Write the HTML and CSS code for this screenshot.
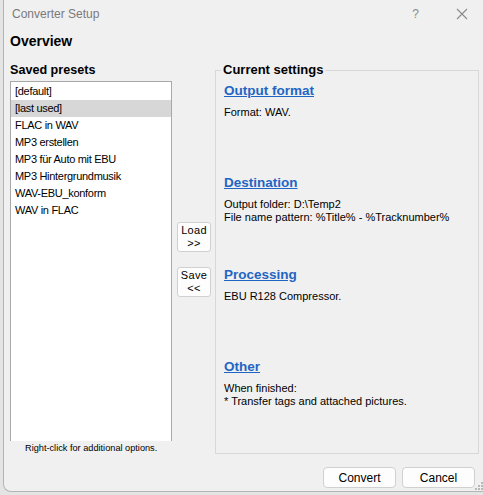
FILE: index.html
```html
<!DOCTYPE html>
<html>
<head>
<meta charset="utf-8">
<link rel="stylesheet" href="styles.css">
</head>
<body>
<div class="window">
  <div class="titlebar">
    <span class="title">Converter Setup</span>
    <span class="tb-btns">
      <span class="help">?</span>
      <svg class="close" width="12" height="12" viewBox="0 0 12 12"><path d="M1 1L11 11M11 1L1 11" stroke="#8a8a8a" stroke-width="1.1" fill="none"/></svg>
    </span>
  </div>
  <div class="heading">Overview</div>
  <div class="main">
    <div class="leftcol">
      <div class="label">Saved presets</div>
      <ul class="list">
        <li>[default]</li>
        <li class="sel">[last used]</li>
        <li>FLAC in WAV</li>
        <li>MP3 erstellen</li>
        <li>MP3 für Auto mit EBU</li>
        <li>MP3 Hintergrundmusik</li>
        <li>WAV-EBU_konform</li>
        <li>WAV in FLAC</li>
      </ul>
      <div class="hint">Right-click for additional options.</div>
    </div>
    <div class="midcol">
      <button class="small">Load<br>&gt;&gt;</button>
      <button class="small">Save<br>&lt;&lt;</button>
    </div>
    <fieldset class="group">
      <legend>Current settings</legend>
      <div class="section">
        <a class="link">Output format</a>
        <p>Format: WAV.</p>
      </div>
      <div class="section">
        <a class="link">Destination</a>
        <p>Output folder: D:\Temp2<br>File name pattern: %Title% - %Tracknumber%</p>
      </div>
      <div class="section">
        <a class="link">Processing</a>
        <p>EBU R128 Compressor.</p>
      </div>
      <div class="section">
        <a class="link">Other</a>
        <p>When finished:<br>* Transfer tags and attached pictures.</p>
      </div>
    </fieldset>
  </div>
  <div class="footer">
    <button class="btn">Convert</button>
    <button class="btn">Cancel</button>
    <svg class="grip" width="8" height="8" viewBox="0 0 8 8"><g fill="#b8b8b8"><rect x="6" y="0" width="2" height="2"/><rect x="3" y="3" width="2" height="2"/><rect x="6" y="3" width="2" height="2"/><rect x="0" y="6" width="2" height="2"/><rect x="3" y="6" width="2" height="2"/><rect x="6" y="6" width="2" height="2"/></g></svg>
  </div>
</div>
</body>
</html>
```
FILE: styles.css
```css
html, body {
  margin: 0;
  padding: 0;
  background: #e4e4e4;
  width: 483px;
  height: 495px;
  overflow: hidden;
  font-family: "Liberation Sans", Arial, sans-serif;
}
.window {
  margin-left: 3px;
  width: 480px;
  height: 492px;
  box-sizing: border-box;
  background: #f0f0f0;
  border-left: 1px solid #b4b4b4;
  border-bottom: 1px solid #b4b4b4;
  border-bottom-left-radius: 8px;
  display: flex;
  flex-direction: column;
  position: relative;
}
.titlebar {
  height: 28px;
  display: flex;
  align-items: center;
  justify-content: space-between;
  padding-left: 8px;
}
.title {
  font-size: 12px;
  color: #7a7a7a;
}
.tb-btns {
  display: flex;
  align-items: center;
}
.help {
  font-size: 12px;
  color: #8a8a8a;
  margin-right: 37px;
}
.close {
  margin-right: 15px;
}
.heading {
  font-weight: bold;
  font-size: 14px;
  height: 32px;
  line-height: 26px;
  padding-left: 6px;
  color: #000;
}
.main {
  display: flex;
  padding-left: 6px;
  height: 395px;
}
.leftcol {
  width: 162px;
  display: flex;
  flex-direction: column;
}
.label {
  font-weight: bold;
  font-size: 12.6px;
  line-height: 20px;
  height: 21px;
}
.list {
  list-style: none;
  margin: 0;
  padding: 1px 0 0 0;
  height: 360px;
  box-sizing: border-box;
  background: #fff;
  border: 1px solid #a8a8a8;
  border-bottom: none;
}
.list li {
  font-size: 11px;
  letter-spacing: -0.3px;
  line-height: 17px;
  height: 17px;
  padding-left: 4px;
  color: #000;
}
.list li.sel {
  background: #d7d7d7;
}
.hint {
  font-size: 9.2px;
  line-height: 12px;
  margin-top: 1px;
  padding-left: 15px;
  color: #000;
}
.midcol {
  width: 43px;
  display: flex;
  flex-direction: column;
  align-items: flex-start;
  padding-left: 5px;
  padding-top: 162px;
  gap: 15px;
  box-sizing: border-box;
}
.small {
  width: 34px;
  height: 30px;
  padding: 0;
  font-family: "Liberation Sans", Arial, sans-serif;
  font-size: 11px;
  line-height: 13px;
  letter-spacing: 0.3px;
  background: #fdfdfd;
  border: 1px solid #d0d0d0;
  border-radius: 3px;
  color: #000;
}
.group {
  margin: 0;
  width: 264px;
  height: 394px;
  box-sizing: border-box;
  border: 1px solid #d8d8d8;
  padding: 2px 8px 0 8px;
  min-width: 0;
}
.group legend {
  font-weight: bold;
  font-size: 13px;
  line-height: 20px;
  padding: 0 2px;
  margin-left: -3px;
  color: #000;
}
.section {
  height: 92px;
}
.link {
  display: block;
  font-weight: bold;
  font-size: 13.5px;
  line-height: 18px;
  color: #1f66c4;
  text-decoration: underline;
}
.section p {
  margin: 6px 0 0 0;
  font-size: 11px;
  line-height: 13px;
  color: #000;
}
.footer {
  display: flex;
  justify-content: flex-end;
  align-items: flex-start;
  padding-top: 12px;
  padding-right: 8px;
  gap: 6px;
  position: relative;
  flex: 1;
}
.btn {
  width: 73px;
  height: 21px;
  padding: 0;
  font-family: "Liberation Sans", Arial, sans-serif;
  font-size: 12px;
  background: #fdfdfd;
  border: 1px solid #d0d0d0;
  border-radius: 4px;
  color: #000;
}
.grip {
  position: absolute;
  right: 0;
  bottom: 1px;
}
```
